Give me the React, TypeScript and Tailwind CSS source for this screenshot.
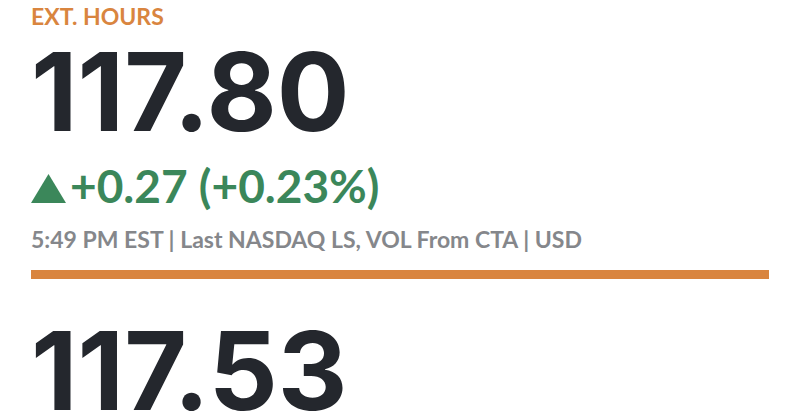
import React from 'react';

interface PriceProps {
  label: string;
  value: string;
}

function Price({ label, value }: PriceProps) {
  return (
    <p aria-label={label} className="font-['Inter',sans-serif] text-[108px] leading-[96px] font-bold text-[#24272d]">
      {value}
    </p>
  );
}

export default function App() {
  return (
    <main className="bg-white px-[31px] font-['Lato','Open_Sans',sans-serif]">
      <section className="border-b-[9px] border-[#d9853f] pt-[3px] pb-[17px]">
        <h2 className="text-[23px] leading-[26px] font-bold text-[#d9853f]">EXT. HOURS</h2>
        <div className="mt-[15px]">
          <Price label="Extended hours price" value="117.80" />
        </div>
        <div className="mt-5 flex items-baseline text-[#3b875a]">
          <svg viewBox="0 0 36 30" className="mr-1 h-[29px] w-[35px]" fill="currentColor" preserveAspectRatio="none" aria-hidden="true">
            <path d="M18 0 36 30H0Z" />
          </svg>
          <span className="text-[46px] leading-[52px] font-bold">+0.27 (+0.23%)</span>
        </div>
        <p className="mt-[13px] text-[23px] leading-[28px] font-bold text-[#85878b]">
          5:49 PM EST | Last NASDAQ LS, VOL From CTA | USD
        </p>
      </section>
      <section className="pt-11">
        <Price label="Closing price" value="117.53" />
      </section>
    </main>
  );
}
